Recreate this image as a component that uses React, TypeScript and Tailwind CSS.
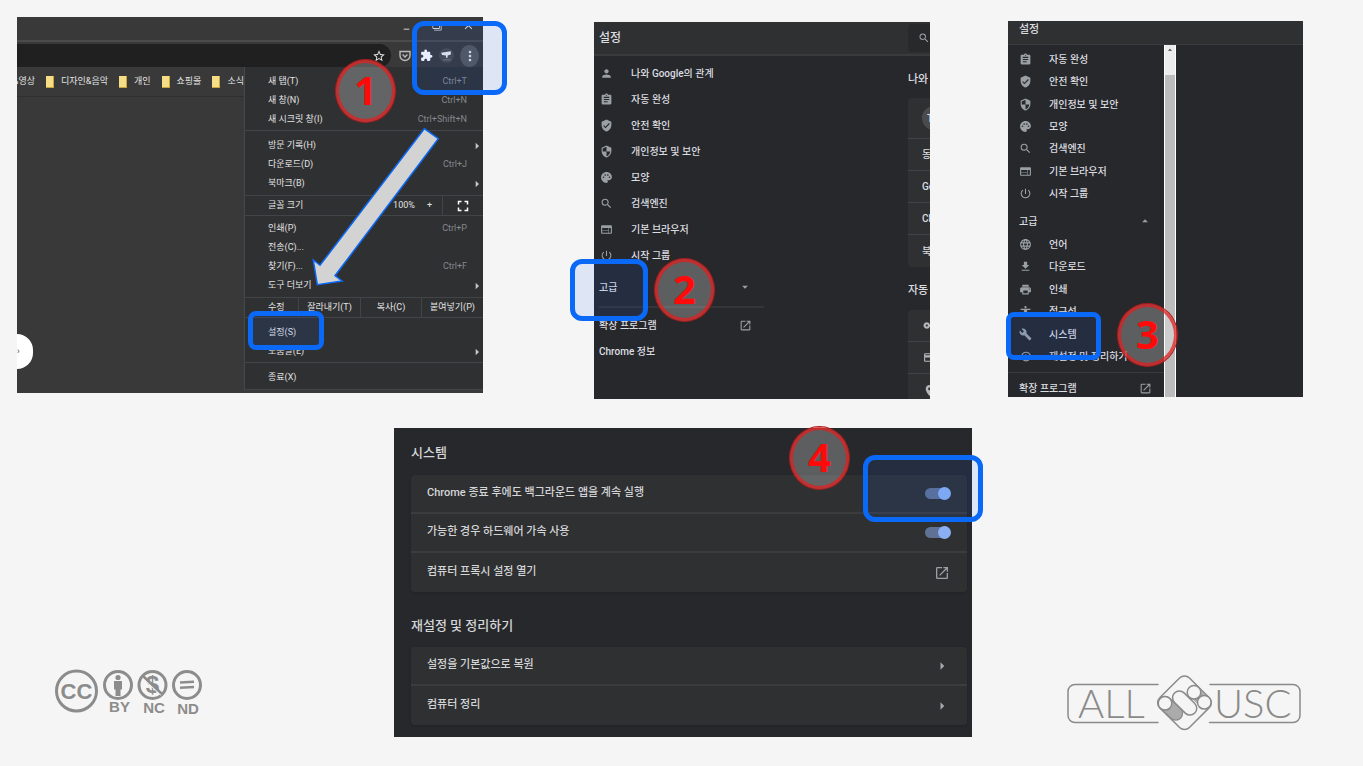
import { useState } from 'react';
import type { ReactNode } from 'react';
import type { IconType } from 'react-icons';
import {
  MdAccessibility,
  MdArrowDropDown,
  MdArrowDropUp,
  MdArrowRight,
  MdAssignment,
  MdBuild,
  MdClose,
  MdCreditCard,
  MdExtension,
  MdFileDownload,
  MdFilterNone,
  MdFullscreen,
  MdLanguage,
  MdLocationOn,
  MdMinimize,
  MdMoreVert,
  MdOpenInNew,
  MdPalette,
  MdPerson,
  MdPowerSettingsNew,
  MdPrint,
  MdRestore,
  MdSearch,
  MdSecurity,
  MdStarBorder,
  MdVerifiedUser,
  MdVpnKey,
  MdWeb,
} from 'react-icons/md';

interface NavItem {
  label: string;
  icon: IconType;
}

interface MenuItem {
  label: string;
  shortcut?: string;
  submenu?: boolean;
}

const BOOKMARKS = ['디자인&음악', '개인', '쇼핑몰', '소식'];

const TAB_MENU: MenuItem[] = [
  { label: '새 탭(T)', shortcut: 'Ctrl+T' },
  { label: '새 창(N)', shortcut: 'Ctrl+N' },
  { label: '새 시크릿 창(I)', shortcut: 'Ctrl+Shift+N' },
];

const HISTORY_MENU: MenuItem[] = [
  { label: '방문 기록(H)', submenu: true },
  { label: '다운로드(D)', shortcut: 'Ctrl+J' },
  { label: '북마크(B)', submenu: true },
];

const TOOLS_MENU: MenuItem[] = [
  { label: '인쇄(P)', shortcut: 'Ctrl+P' },
  { label: '전송(C)...' },
  { label: '찾기(F)...', shortcut: 'Ctrl+F' },
  { label: '도구 더보기', submenu: true },
];

const SETTINGS_MENU: MenuItem[] = [
  { label: '설정(S)' },
  { label: '도움말(E)', submenu: true },
];

const BASIC_NAV: NavItem[] = [
  { label: '자동 완성', icon: MdAssignment },
  { label: '안전 확인', icon: MdVerifiedUser },
  { label: '개인정보 및 보안', icon: MdSecurity },
  { label: '모양', icon: MdPalette },
  { label: '검색엔진', icon: MdSearch },
  { label: '기본 브라우저', icon: MdWeb },
  { label: '시작 그룹', icon: MdPowerSettingsNew },
];

const ADVANCED_NAV: NavItem[] = [
  { label: '언어', icon: MdLanguage },
  { label: '다운로드', icon: MdFileDownload },
  { label: '인쇄', icon: MdPrint },
  { label: '접근성', icon: MdAccessibility },
  { label: '시스템', icon: MdBuild },
  { label: '재설정 및 정리하기', icon: MdRestore },
];

/* Blue highlight frame */
function Highlight({ className }: { className: string }) {
  return (
    <div
      className={`pointer-events-none absolute border-5 border-[#0a69f7] bg-[#1464ff]/10 ${className}`}
    />
  );
}

/* Numbered red step marker */
function Step({ n, className }: { n: number; className: string }) {
  return (
    <div
      className={`pointer-events-none absolute flex h-16 w-[61px] items-center justify-center rounded-[50%] border border-[#b01818] bg-white/25 pb-[2px] font-['Open_Sans','Noto_Sans',sans-serif] text-[40px] leading-none font-bold text-[#ff0a0a] ring-3 ring-[#e02020]/75 ring-inset ${className}`}
    >
      {n}
    </div>
  );
}

function MenuGroup({ items, className }: { items: MenuItem[]; className: string }) {
  return (
    <div className={`border-b border-[#424447] ${className}`}>
      {items.map((item) => (
        <button
          key={item.label}
          className="flex h-[19px] w-full items-center justify-between pr-4 pl-[23px] text-left"
        >
          <span>{item.label}</span>
          {item.shortcut && <span className="text-[#85888c]">{item.shortcut}</span>}
          {item.submenu && <MdArrowRight className="-mr-[18px] size-4 text-[#c4c5c7]" />}
        </button>
      ))}
    </div>
  );
}

function BrowserPanel() {
  return (
    <section className="relative col-start-1 min-w-0 font-['Roboto','Noto_Sans_CJK_KR',sans-serif] text-[9px] text-[#e3e3e3]">
      <div className="flex h-full flex-col overflow-hidden bg-[#393939]">
        {/* Title bar */}
        <div className="flex h-[25px] justify-end gap-5 border-b-2 border-[#4b4b4b] pt-[2px] pr-2">
          <button aria-label="최소화">
            <MdMinimize className="-mt-2 size-[11px]" />
          </button>
          <button aria-label="이전 크기로">
            <MdFilterNone className="-mt-2 size-[10px] -scale-x-100" />
          </button>
          <button aria-label="닫기">
            <MdClose className="-mt-2 size-[13px]" />
          </button>
        </div>

        {/* Toolbar */}
        <div className="mt-[2px] flex h-[23px] items-center">
          <div className="flex h-full flex-1 items-center justify-end rounded-r-full bg-[#202020] pr-[5px]">
            <MdStarBorder className="size-[14px]" />
          </div>
          <div className="flex items-center gap-[6px] pr-1 pl-2">
            <svg
              viewBox="0 0 12 12"
              className="mr-[3px] size-3"
              fill="none"
              stroke="#b9babb"
              strokeWidth="1.4"
            >
              <path d="M1 1.5h10v4a5 5 0 0 1-10 0zM3.6 4.6 6 7l2.4-2.4" />
            </svg>
            <MdExtension className="size-[13px] text-white" />
            <span className="flex size-[15px] items-center justify-center rounded-full bg-[#4a4a4a]">
              <svg viewBox="0 0 12 12" className="size-[13px]">
                <path d="M1 3.5 10 2v3L7 6v2H5.500V6L2 5.500z" fill="#eee" />
                <path d="M3 10h7" stroke="#777" />
              </svg>
            </span>
            <button
              aria-label="메뉴"
              className="flex h-[22px] w-[19px] items-center justify-center rounded-[50%] bg-[#555759]"
            >
              <MdMoreVert className="size-4" />
            </button>
          </div>
        </div>

        <div className="flex flex-1">
          <div className="min-w-0 flex-1 overflow-hidden">
            {/* Bookmarks */}
            <div className="flex h-[30px] items-center gap-[11px] border-b border-[#2f2f2f] whitespace-nowrap">
              <div className="flex w-[18px] shrink-0 justify-end overflow-hidden">
                <span>&amp;영상</span>
              </div>
              {BOOKMARKS.map((name) => (
                <div key={name} className="flex shrink-0 items-center gap-[7px]">
                  <span className="h-3 w-2 border-r border-b border-[#c9a43c] bg-[#f6dd88]" />
                  <span>{name}</span>
                </div>
              ))}
            </div>
            <div className="mt-[237px] flex h-[35px] w-4 items-center rounded-r-full bg-white text-[#444]">
              ›
            </div>
          </div>

          {/* Main menu */}
          <div className="mb-[3px] w-[239px] shrink-0 border-l border-[#45484a] bg-[#2f3032]">
            <MenuGroup items={TAB_MENU} className="pt-[5px] pb-[1px]" />
            <MenuGroup items={HISTORY_MENU} className="pt-[5px] pb-[2px]" />
            <div className="flex h-5 items-center border-b border-[#424447] pl-[23px]">
              <span className="flex-1">글꼴 크기</span>
              <span className="pr-3">100%</span>
              <button aria-label="확대" className="pr-[10px]">
                +
              </button>
              <button
                aria-label="전체화면"
                className="flex h-full w-[41px] items-center justify-center border-l border-[#424447] text-white"
              >
                <MdFullscreen className="size-[18px]" />
              </button>
            </div>
            <MenuGroup items={TOOLS_MENU} className="pt-[3px] pb-[2px]" />
            <div className="flex h-5 items-stretch border-b border-[#424447] pl-[23px]">
              <span className="flex flex-1 items-center">수정</span>
              <button className="w-[62px] border-l border-[#424447]">잘라내기(T)</button>
              <button className="w-[61px] border-l border-[#424447]">복사(C)</button>
              <button className="w-[62px] border-l border-[#424447]">붙여넣기(P)</button>
            </div>
            <MenuGroup items={SETTINGS_MENU} className="pt-[5px] pb-[1px]" />
            <MenuGroup items={[{ label: '종료(X)' }]} className="pt-[5px] pb-[2px]" />
          </div>
        </div>
      </div>

      <svg
        viewBox="0 0 140 170"
        className="pointer-events-none absolute top-[105px] left-[290px] h-[170px] w-[140px]"
      >
        <path
          d="M117.300 6.700 131.300 16.700 28 153.700 35 159 10.300 162.700 6.300 138 13 143.300z"
          fill="#d3d3d3"
          stroke="#0a69f7"
          strokeWidth="1.500"
        />
      </svg>
      <Highlight className="top-1 left-[395px] h-[74px] w-[95px] rounded-xl" />
      <Highlight className="top-[294px] left-[231px] h-[39px] w-[76px] rounded-lg" />
      <Step n={1} className="top-[42px] left-[318px]" />
    </section>
  );
}

function NavLink({ item, className }: { item: NavItem; className: string }) {
  const Icon = item.icon;

  return (
    <a href="#" className={`flex items-center ${className}`}>
      <Icon className="size-[13px] shrink-0 text-[#9aa0a6]" />
      <span>{item.label}</span>
    </a>
  );
}

function SettingsPanel() {
  return (
    <section className="relative col-start-3 mt-[5px] min-w-0 font-['Roboto','Noto_Sans_CJK_KR',sans-serif] text-[10px] font-medium text-[#dcdde0]">
      <div className="overflow-hidden bg-[#27282b]">
        <header className="flex h-[34px] items-center justify-between border-b-2 border-[#3a3b3c] bg-[#2f3031] pl-[5px]">
          <h2 className="text-xs">설정</h2>
          <button
            aria-label="검색"
            className="flex h-7 w-[22px] items-center justify-end rounded-l-sm bg-[#28292b]"
          >
            <MdSearch className="size-3 text-[#9aa0a6]" />
          </button>
        </header>

        <div className="flex h-[343px] justify-between">
          <nav className="w-[170px] pt-1 whitespace-nowrap">
            {[{ label: '나와 Google의 관계', icon: MdPerson }, ...BASIC_NAV].map((item) => (
              <NavLink key={item.label} item={item} className="h-[26px] gap-[18px] pl-[6px]" />
            ))}
            <div className="ml-[5px] border-b-2 border-[#343538]">
              <button className="flex h-[38px] w-full items-center justify-between pr-3">
                고급
                <MdArrowDropDown className="size-[14px] text-[#9aa0a6]" />
              </button>
            </div>
            <a href="#" className="mt-1 flex h-[26px] items-center justify-between pr-3 pl-[5px]">
              확장 프로그램
              <MdOpenInNew className="size-[13px] text-[#9aa0a6]" />
            </a>
            <a href="#" className="flex h-[26px] items-center pl-[5px]">
              Chrome 정보
            </a>
          </nav>

          {/* Main column, cut off at the panel edge */}
          <div className="w-[22px] overflow-hidden whitespace-nowrap">
            <h3 className="flex h-[42px] items-center pt-[6px] text-[11px]">나와</h3>
            <div className="w-20 divide-y divide-[#424346] rounded bg-[#2f3032]">
              <div className="flex h-[41px] items-center pl-[14px]">
                <span className="flex size-6 items-center rounded-full bg-[#4a4b4d] pl-[5px]">T</span>
              </div>
              {['동', 'Go', 'Ch', '북'].map((row) => (
                <div key={row} className="flex h-8 items-center pl-[14px]">
                  {row}
                </div>
              ))}
            </div>
            <h3 className="flex h-[43px] items-center pt-[6px] text-[11px]">자동</h3>
            <div className="w-20 divide-y divide-[#424346] rounded bg-[#2f3032]">
              {[MdVpnKey, MdCreditCard, MdLocationOn].map((Icon, i) => (
                <div key={i} className="flex h-8 items-center pl-[15px]">
                  <Icon className="size-[13px] text-[#b4b7bb]" />
                </div>
              ))}
            </div>
          </div>
        </div>
      </div>

      <Highlight className="top-[237px] -left-6 h-[62px] w-[78px] rounded-xl" />
      <Step n={2} className="top-[236px] left-[60px]" />
    </section>
  );
}

function AdvancedPanel() {
  return (
    <section className="relative col-start-5 mt-1 min-w-0 font-['Roboto','Noto_Sans_CJK_KR',sans-serif] text-[10px] font-medium text-[#dcdde0]">
      <div className="overflow-hidden bg-[#27282b]">
        <header className="h-6 border-b border-[#3a3b3c] bg-[#2f3031] pl-[11px]">
          <h2 className="text-[11px] leading-[18px]">설정</h2>
        </header>

        <div className="flex h-[352px]">
          <nav className="w-[156px] pt-[3px] whitespace-nowrap">
            <div className="grid h-[157px] auto-rows-fr">
              {BASIC_NAV.map((item) => (
                <NavLink key={item.label} item={item} className="gap-[17px] pl-[11px]" />
              ))}
            </div>
            <button className="flex h-7 w-full items-center justify-between pt-1 pr-3 pl-[11px]">
              고급
              <MdArrowDropUp className="size-[14px] text-[#9aa0a6]" />
            </button>
            <div className="grid h-[135px] auto-rows-fr">
              {ADVANCED_NAV.map((item) => (
                <NavLink key={item.label} item={item} className="gap-[17px] pl-[11px]" />
              ))}
            </div>
            <a
              href="#"
              className="mt-1 flex h-8 items-center justify-between border-t border-[#3a3b3e] pr-3 pl-[11px]"
            >
              확장 프로그램
              <MdOpenInNew className="size-[13px] text-[#9aa0a6]" />
            </a>
          </nav>
          {/* Scrollbar */}
          <div className="flex w-3 flex-col border-x border-white bg-[#ececec]">
            <MdArrowDropUp className="h-[30px] w-[10px] pb-5 text-[#444]" />
            <div className="flex-1 bg-[#bcbcbc]" />
          </div>
        </div>
      </div>

      <Highlight className="top-[291px] left-[-2px] h-12 w-[95px] rounded-lg" />
      <Step n={3} className="top-[282px] left-[109px]" />
    </section>
  );
}

function Row({ children }: { children: ReactNode }) {
  return <div className="flex h-[39px] items-center justify-between px-4">{children}</div>;
}

function Toggle({ id, label }: { id: string; label: string }) {
  const [on, setOn] = useState(true);

  return (
    <Row>
      <label htmlFor={id}>{label}</label>
      <input
        id={id}
        type="checkbox"
        checked={on}
        onChange={() => setOn(!on)}
        className="flex h-[13px] w-[26px] appearance-none items-center justify-start rounded-full before:h-[11px] before:w-[23px] before:shrink-0 before:rounded-full before:bg-[#5f7296] after:size-[13px] after:shrink-0 after:rounded-full after:bg-[#8ab0f3] checked:after:-ml-[10px] not-checked:after:-ml-[23px]"
      />
    </Row>
  );
}

function SystemPanel() {
  return (
    <section className="relative min-w-0 bg-[#27282b] pr-[5px] pb-3 pl-[17px] font-['Roboto','Noto_Sans_CJK_KR',sans-serif] text-[11px] font-medium text-[#d4d5d7]">
      <h2 className="flex h-[47px] items-center pt-[3px] text-[13px]">시스템</h2>
      <div className="divide-y-2 divide-[#3b3c3e] rounded bg-[#2f3032] shadow">
        <Toggle id="background-apps" label="Chrome 종료 후에도 백그라운드 앱을 계속 실행" />
        <Toggle id="hardware" label="가능한 경우 하드웨어 가속 사용" />
        <Row>
          <a href="#">컴퓨터 프록시 설정 열기</a>
          <MdOpenInNew className="mr-[1px] size-4 text-[#9aa0a6]" />
        </Row>
      </div>

      <h2 className="flex h-[55px] items-center pt-3 text-[13px]">재설정 및 정리하기</h2>
      <div className="divide-y-2 divide-[#3b3c3e] rounded bg-[#2f3032] shadow">
        {['설정을 기본값으로 복원', '컴퓨터 정리'].map((label) => (
          <Row key={label}>
            <a href="#">{label}</a>
            <MdArrowRight className="size-[18px] text-[#a6a9ad]" />
          </Row>
        ))}
      </div>

      <Highlight className="top-[27px] right-[-11px] h-[67px] w-[120px] rounded-xl" />
      <Step n={4} className="-top-[2px] right-[122px]" />
    </section>
  );
}

function LicenseBadge() {
  return (
    <svg
      viewBox="0 0 150 50"
      className="mb-5 h-[50px] w-[150px] self-end font-['Liberation_Sans',sans-serif] font-bold"
      fill="#8c8c8c"
      textAnchor="middle"
    >
      <g fill="none" stroke="#8c8c8c" strokeWidth="3">
        <circle cx="21.500" cy="24" r="20" />
        <circle cx="63" cy="18" r="13.500" />
        <circle cx="97.500" cy="18" r="13.500" />
        <circle cx="132" cy="18" r="13.500" />
        <path d="M125 15.500 139 14.800M125 20.800 139 20.100" strokeWidth="2.500" />
      </g>
      <text x="21.500" y="31.500" fontSize="22">CC</text>
      <circle cx="63" cy="10.500" r="2.600" />
      <path d="M59 14h8v8.500h-1.500V29h-5v-6.500H59z" />
      <text x="97.500" y="26" fontSize="24">$</text>
      <path d="M89 12 106 28" stroke="#f5f5f5" strokeWidth="1.500" />
      <path d="M88 9 107 27" stroke="#8c8c8c" strokeWidth="2.500" />
      <text x="64.500" y="45" fontSize="15">BY</text>
      <text x="99" y="46" fontSize="15">NC</text>
      <text x="133" y="47" fontSize="15">ND</text>
    </svg>
  );
}

function AllUseLogo() {
  return (
    <svg
      viewBox="2 0 234 60"
      className="col-start-4 mb-1 h-[60px] w-full self-end font-['Lato',sans-serif] font-light"
      fill="none"
      stroke="#8a8a8a"
      strokeWidth="1.500"
      strokeLinecap="round"
    >
      <path d="M93 11.500H10a7 7 0 0 0-7 7v24a7 7 0 0 0 7 7h83" />
      <path d="M145 11.500h83a7 7 0 0 1 7 7v24a7 7 0 0 1-7 7h-83.500" />
      <rect x="98.500" y="8.700" width="42" height="42" rx="7" transform="rotate(45 119.500 29.700)" />
      <path d="M129 19.300 139.300 29.300" stroke="#ababab" strokeWidth="12" />
      <path d="M100 30.300 110.700 40.300" strokeWidth="15" />
      <path d="M100 30.300 110.700 40.300" stroke="#ababab" strokeWidth="12.500" />
      <path d="M114.300 24.700 125 35.300" strokeWidth="15" />
      <path d="M114.300 24.700 125 35.300" stroke="#f5f5f5" strokeWidth="12" />
      <g fill="#f5f5f5">
        <circle cx="100" cy="30.300" r="6.800" />
        <circle cx="129" cy="19.300" r="6.800" />
        <circle cx="139.300" cy="29.300" r="6.800" />
      </g>
      <g fill="#8a8a8a" stroke="none" fontSize="40">
        <text x="13" y="45">ALL</text>
        <text x="149" y="45">USC</text>
      </g>
    </svg>
  );
}

export default function App() {
  return (
    <main className="min-h-screen bg-[#f5f5f5] pt-[17px] pb-7">
      {/* Steps 1-3 */}
      <div className="grid grid-cols-[466fr_111fr_336fr_78fr_295fr] items-start pr-[60px] pl-[17px]">
        <BrowserPanel />
        <SettingsPanel />
        <AdvancedPanel />
      </div>

      {/* Step 4 */}
      <div className="mt-[29px] grid grid-cols-[339fr_578fr_95fr_234fr] pr-[62px] pl-[55px]">
        <LicenseBadge />
        <SystemPanel />
        <AllUseLogo />
      </div>
    </main>
  );
}
